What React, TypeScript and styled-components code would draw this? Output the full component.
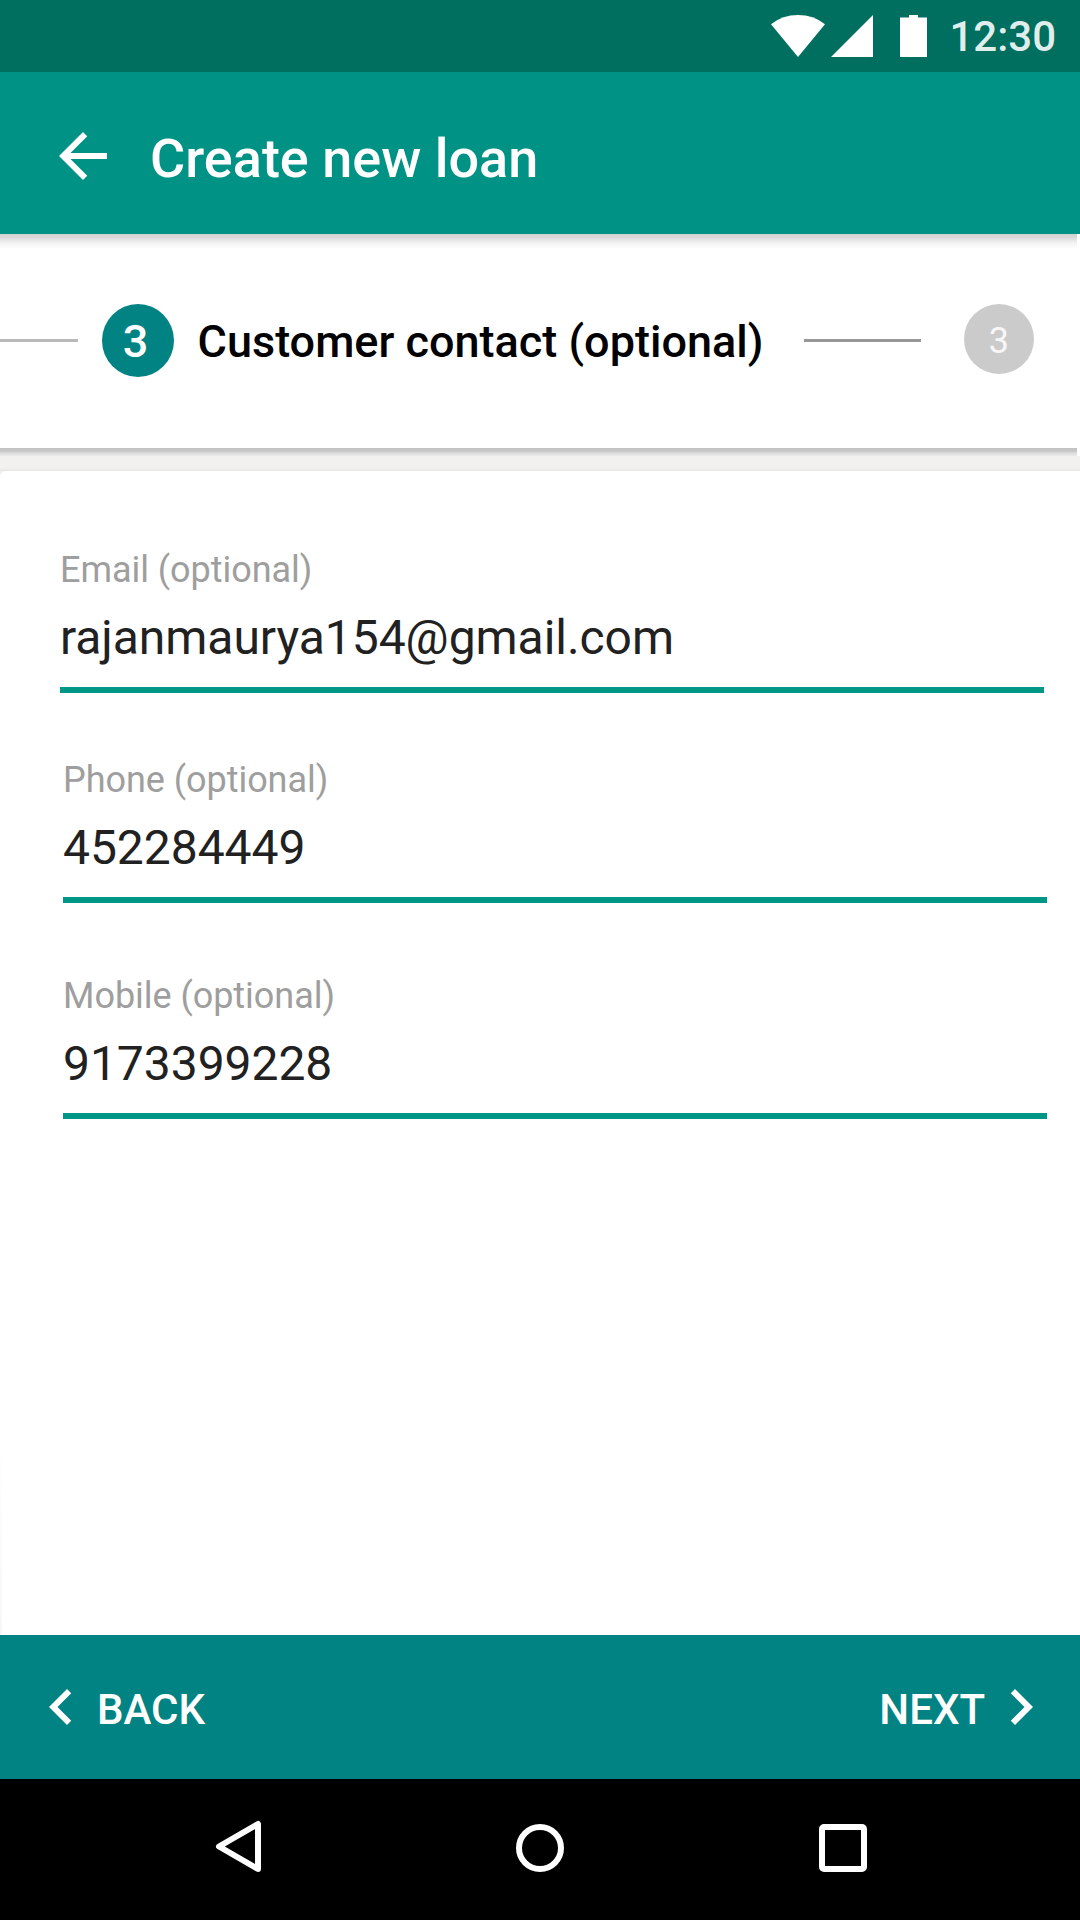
import React from "react";
import styled, { createGlobalStyle } from "styled-components";

const GlobalStyle = createGlobalStyle`
  *, *::before, *::after { box-sizing: border-box; }
  body { margin: 0; background: #fff; }
`;

const Screen = styled.div`
  width: 1080px;
  height: 1920px;
  display: flex;
  flex-direction: column;
  overflow: hidden;
  background: #fff;
  font-family: Roboto, "Liberation Sans", sans-serif;
`;

const StatusBar = styled.header`
  height: 72px;
  flex: none;
  display: flex;
  justify-content: flex-end;
  align-items: center;
  padding-right: 24px;
  background: #006f60;
`;

const StatusIcons = styled.svg`
  display: block;
  width: 156px;
  height: 42px;
`;

const Clock = styled.span`
  margin-left: 22px;
  padding-top: 2px;
  font-size: 42px;
  font-weight: 500;
  line-height: 70px;
  color: rgba(255, 255, 255, 0.9);
`;

const AppBar = styled.div`
  height: 162px;
  flex: none;
  display: flex;
  align-items: center;
  padding: 6px 0 0 47px;
  background: #009284;
`;

const Icon = styled.svg`
  display: block;
  flex: none;
  width: 72px;
  height: 72px;
  fill: #fff;
`;

const Title = styled.h1`
  margin: 6px 0 0 31px;
  font-size: 54px;
  font-weight: 500;
  line-height: 64px;
  color: #fff;
`;

const Stepper = styled.section`
  height: 222px;
  flex: none;
  padding-right: 3px;
`;

const StepperTrack = styled.div`
  height: 214px;
  display: flex;
  align-items: flex-start;
  padding-top: 70px;
  background: linear-gradient(#d2d2d2, #d8d8d8 3px, #f3f3f3 9px, #fff 15px);
`;

const StepperShadow = styled.div`
  height: 8px;
  background: linear-gradient(#c3c3c3, #c6c6c6 3px, #dcdcdc 5px, #ebebea 8px);
`;

const Connector = styled.div<{ $width: number; $color: string }>`
  width: ${(p) => p.$width}px;
  height: 3px;
  margin-top: 35px;
  flex: none;
  background: ${(p) => p.$color};
`;

const StepBadge = styled.div<{ $active?: boolean }>`
  width: ${(p) => (p.$active ? 72 : 70)}px;
  height: ${(p) => (p.$active ? 73 : 70)}px;
  margin-left: ${(p) => (p.$active ? 23.6 : 43)}px;
  flex: none;
  border-radius: 50%;
  text-align: center;
  font-size: ${(p) => (p.$active ? 45 : 36)}px;
  font-weight: ${(p) => (p.$active ? 500 : 400)};
  line-height: ${(p) => (p.$active ? 76 : 74)}px;
  padding-right: ${(p) => (p.$active ? 4 : 0)}px;
  color: ${(p) => (p.$active ? "#fff" : "#f7f7f7")};
  background: ${(p) => (p.$active ? "#008382" : "#cbcbcb")};
`;

const StepTitle = styled.h2`
  width: 630.4px;
  margin: 0;
  padding-left: 24px;
  flex: none;
  white-space: nowrap;
  font-size: 45px;
  font-weight: 500;
  line-height: 76px;
  color: #000;
`;

const Gap = styled.div`
  height: 15px;
  flex: none;
  background: linear-gradient(#f2f1ef 12px, #e6e5e3);
`;

const CardBack = styled.main`
  flex: 1;
  background: linear-gradient(#f2f1ef 10px, #fff 10px);
`;

const Card = styled.div`
  height: 100%;
  padding: 78px 33px 0 60px;
  border-radius: 6px 0 0 0;
  background:
    linear-gradient(rgba(247, 247, 247, 0) 970px, #f7f7f7) 0 0 / 2px 100% no-repeat,
    #fff;
`;

const Field = styled.label<{ $indent?: boolean; $gap: number }>`
  display: block;
  width: 984px;
  margin-left: ${(p) => (p.$indent ? 3 : 0)}px;
  margin-bottom: ${(p) => p.$gap}px;
  border-bottom: 6px solid #009787;
`;

const FieldLabel = styled.span`
  display: block;
  height: 42px;
  font-size: 36px;
  line-height: 42px;
  letter-spacing: -0.04px;
  color: #9e9e9e;
`;

const FieldInput = styled.input`
  display: block;
  width: 100%;
  height: 96px;
  margin: 0;
  padding: 0 0 4px;
  border: 0;
  outline: 0;
  background: transparent;
  font: 400 48px/56px Roboto, "Liberation Sans", sans-serif;
  letter-spacing: -0.05px;
  color: #212121;
`;

const ActionBar = styled.footer`
  height: 144px;
  flex: none;
  display: flex;
  justify-content: space-between;
  align-items: center;
  padding: 0 23px 0 25px;
  background: #008382;
`;

const ActionButton = styled.button`
  display: flex;
  align-items: center;
  padding: 0;
  border: 0;
  background: none;
  color: #fff;
  font: 500 42px/50px Roboto, "Liberation Sans", sans-serif;
`;

const ActionText = styled.span`
  padding-top: 5px;
`;

const NavBar = styled.nav`
  height: 141px;
  flex: none;
  display: flex;
  padding: 39px 0 0 213px;
  gap: 249px;
  background: #000;
`;

const NavIcon = styled.svg`
  display: block;
  width: 54px;
  height: 57px;
  fill: none;
  stroke: #fff;
  stroke-width: 6;
`;

const fields = [
  { label: "Email (optional)", value: "rajanmaurya154@gmail.com", gap: 66, indent: false },
  { label: "Phone (optional)", value: "452284449", gap: 72, indent: true },
  { label: "Mobile (optional)", value: "9173399228", gap: 0, indent: true },
];

export default function App() {
  return (
    <>
      <GlobalStyle />
      <Screen>
        <StatusBar>
          <StatusIcons viewBox="0 0 156 42" fill="#fff">
            <path d="M27 42 0 9.2Q11.5 0 27 0t27 9.2z" />
            <path d="M60 42 102 0v42z" />
            <path d="M129 2.5h9V0h9v2.5h9V42h-27z" />
          </StatusIcons>
          <Clock>12:30</Clock>
        </StatusBar>
        <AppBar>
          <Icon viewBox="0 0 24 24">
            <path d="M20 11H7.83l5.59-5.59L12 4l-8 8 8 8 1.41-1.41L7.83 13H20v-2z" />
          </Icon>
          <Title>Create new loan</Title>
        </AppBar>
        <Stepper>
          <StepperTrack>
            <Connector $width={78} $color="#b9b9b9" />
            <StepBadge $active>3</StepBadge>
            <StepTitle>Customer contact (optional)</StepTitle>
            <Connector $width={117} $color="#979797" />
            <StepBadge>3</StepBadge>
          </StepperTrack>
          <StepperShadow />
        </Stepper>
        <Gap />
        <CardBack>
          <Card>
            {fields.map((f) => (
              <Field key={f.label} $indent={f.indent} $gap={f.gap}>
                <FieldLabel>{f.label}</FieldLabel>
                <FieldInput defaultValue={f.value} />
              </Field>
            ))}
          </Card>
        </CardBack>
        <ActionBar>
          <ActionButton>
            <Icon viewBox="0 0 24 24">
              <path d="M15.41 7.41 14 6l-6 6 6 6 1.41-1.41L10.83 12z" />
            </Icon>
            <ActionText>BACK</ActionText>
          </ActionButton>
          <ActionButton>
            <ActionText>NEXT</ActionText>
            <Icon viewBox="0 0 24 24">
              <path d="M8.59 7.41 10 6l6 6-6 6-1.41-1.41L13.17 12z" />
            </Icon>
          </ActionButton>
        </ActionBar>
        <NavBar>
          <NavIcon viewBox="0 0 54 57">
            <path d="M45 6v45L6 28.5z" strokeLinejoin="round" />
          </NavIcon>
          <NavIcon viewBox="0 0 54 57">
            <circle cx="24" cy="30" r="21" />
          </NavIcon>
          <NavIcon viewBox="0 0 54 57">
            <rect x="3" y="9" width="42" height="42" rx="2" strokeLinejoin="round" />
          </NavIcon>
        </NavBar>
      </Screen>
    </>
  );
}
